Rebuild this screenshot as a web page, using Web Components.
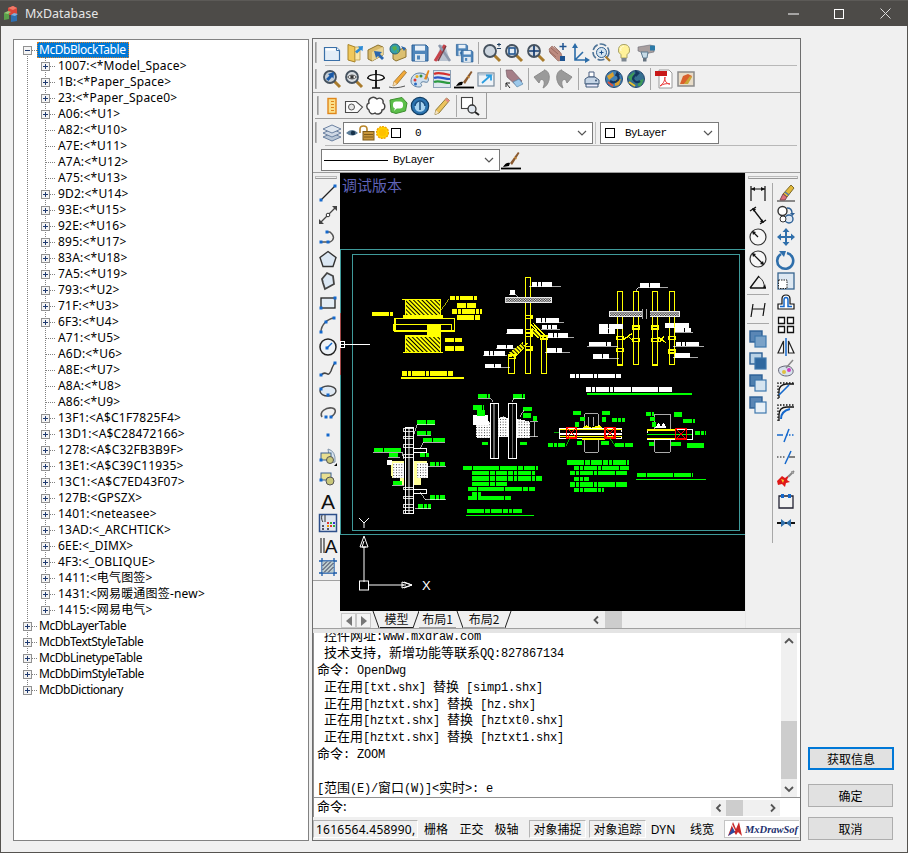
<!DOCTYPE html>
<html><head><meta charset="utf-8">
<style>
html,body{margin:0;padding:0;background:#f0f0f0;overflow:hidden}
</style></head>
<body>
<mx-window></mx-window>
<script>
const SANS='"Noto Sans","Noto Sans CJK SC",sans-serif';
const MONO='"Liberation Mono","Noto Sans CJK SC",monospace';
const mag=(c='#cdd6df')=>`<path d="M12.5 12.5l5.5 5.5" stroke="#a97b2c" stroke-width="3"/><circle cx="8" cy="8" r="6" fill="${c}" stroke="#46525e" stroke-width="1.8"/>`;
const N=(x,y)=>`<rect x="${x-1.5}" y="${y-1.5}" width="3" height="3" fill="#1468cc"/>`;
const floppy=(x,y,s)=>`<g transform="translate(${x} ${y}) scale(${s})"><path d="M2 2h14l2 2v14H2z" fill="#4f86bb" stroke="#2a5f95"/><rect x="5" y="2.6" width="10" height="5" fill="#e9f1f8"/><rect x="5" y="11" width="10" height="7" fill="#dfe8f0"/><rect x="7" y="12.5" width="3" height="4" fill="#4f86bb"/></g>`;
const over=(a,b)=>`<rect x="2" y="2" width="12" height="11" fill="${a}" stroke="#2c5f95" stroke-width="1.4"/><rect x="7" y="7" width="11" height="11" fill="${b}" stroke="#3f78ad" stroke-width="1.2"/>`;
const ICONS={
 new:`<path d="M2.500 4.500h12l3 3v10h-15z" fill="#e3edf7" stroke="#3a70a8" stroke-width="1.200"/><path d="M3.500 5.500h10v2h-10z" fill="#fff"/><path d="M14.500 4.500v3h3" fill="#fff" stroke="#3a70a8"/>`,
 open:`<path d="M4 1.500l7 2.500v15l-7-2z" fill="#f0c85a" stroke="#a98428"/><path d="M11 4h5v13h-5z" fill="#f8e6a8" stroke="#b99a48" stroke-width=".8"/><path d="M19 3l-5 .5 1.300 1.500-4.300 3.500 2 2 4-3.800 1.500 1.500z" fill="#2b8ad6"/>`,
 fold2:`<path d="M2 7l10-5 5 2v8l-11 6-4-2z" fill="#d8b968" stroke="#8d7330"/><path d="M6 9l11-5v8l-11 6z" fill="#e9d596"/><path d="M8 8l2 7 2-2 4 4 2-2-4-4 2-2z" fill="#2a66ad"/>`,
 fold3:`<path d="M5 9l11-4 2 1v8l-10 4-3-2z" fill="#dcc070" stroke="#8d7330"/><circle cx="7" cy="6" r="5" fill="#36a0a8" stroke="#22607a"/><path d="M4 4l4-1 1 3-3 2zM9 7l2 1-2 2z" fill="#5cb04a"/><path d="M13 3l5 2-2 3z" fill="#2a66ad"/>`,
 save:floppy(0,0,1),
 ramp:`<path d="M3 18L9 2h4l5 16z" fill="#b9c3d0"/><path d="M3 18L13 2" stroke="#c8434a" stroke-width="3" fill="none"/><path d="M7 2l11 16" stroke="#8c98ac" stroke-width="2.500" fill="none"/><path d="M14 3l-8 15" stroke="#7a3a40" stroke-width="1.500"/>`,
 saveall:floppy(1,0,.7)+floppy(6,6,.72),
 zpm:mag()+`<path d="M15 1.500h4M17 0v3.500M15 5.500h4" stroke="#1f3f60" stroke-width="1.100" fill="none"/>`,
 zwin:mag()+`<rect x="5" y="5" width="6" height="6" fill="#e4edf5" stroke="#1a4f8a" stroke-width="1.500"/>`,
 zpan:mag('#d6dbe0')+`<path d="M8 3v10M3 8h10" stroke="#113a70" stroke-width="1.700"/>`,
 hand:`<path d="M1 6l3-3 9 7 2 7-5 1-8-8z" fill="#bd8b80" stroke="#8f6258" stroke-width=".6"/><path d="M3 5l7 6M1 8l7 6M6 3l6 6" stroke="#8f6258" stroke-width=".8"/><path d="M15 0v7M11.500 3.500h7" stroke="#1e5390" stroke-width="1.500"/><path d="M12 13h5v5h-5z" fill="#1e5390"/>`,
 axes:`<path d="M5 3v14h13M5 17l8-8" fill="none" stroke="#2b6ca8" stroke-width="1.600"/><path d="M5 0l-3 5h6zM20 17l-5-3v6z" fill="#2b6ca8"/>`,
 zrot:`<circle cx="9" cy="9" r="8" fill="none" stroke="#4f7497" stroke-width="1.500" stroke-dasharray="7 2"/><circle cx="9.500" cy="9.500" r="5" fill="#d4e4f0" stroke="#2e5f90"/><path d="M7.500 9.500h4M9.500 7.500v4" stroke="#1a4f8a"/><path d="M13.500 13.500l4.500 4.500" stroke="#a97b2c" stroke-width="2.200"/>`,
 bulb:`<path d="M10 1.500a5.500 5.500 0 0 1 3 10.200V15H7v-3.300A5.500 5.500 0 0 1 10 1.500z" fill="#fff29a" stroke="#a8a266"/><path d="M10 3a3.500 3.500 0 0 0-3 5" stroke="#fffbe0" fill="none"/><rect x="7.500" y="15" width="5" height="3.500" fill="#7c8690"/>`,
 dry:`<path d="M2 4l12-2 4 1v6l-5 1-2 1-9-3z" fill="#a89e9e" stroke="#6b6b75" stroke-width=".6"/><path d="M14 2.500h5v5h-5z" fill="#2c7aa8"/><path d="M5 9h7l-1 6H7z" fill="#c7dbe7" stroke="#5d7a90"/><rect x="7" y="15" width="3.500" height="3.500" fill="#65727f"/>`,
 zprev:mag('#c4ced8')+`<path d="M12 3l-6 2 1.500 1.500L4 10l2.500 2 3.500-4 1.500 1.500z" fill="#1a5aa8"/>`,
 zeye:mag('#d7dce0')+`<path d="M3.500 8q4.500-4 9 0q-4.500 4-9 0z" fill="#fff" stroke="#555"/><circle cx="8" cy="8" r="1.800" fill="#333"/>`,
 cross:`<path d="M10 1v18M6 19h8M1 9h18" stroke="#111" stroke-width="1.400"/><ellipse cx="10" cy="8.500" rx="8" ry="3" fill="#fff" stroke="#111" stroke-width="1.200"/><path d="M10 1v18" stroke="#111" stroke-width="1.600"/>`,
 pen:`<path d="M1 18q6 2 16-1" stroke="#555" fill="none"/><path d="M16 1.500l2.500 2L9 15l-4 2 1-4.300z" fill="#f2a93a" stroke="#8b6420" stroke-width=".7"/><path d="M5 17l1-4.300 3 2.300z" fill="#f6dcb2"/>`,
 palette:`<path d="M10 4C4 4 1 8 1 12s4 6 8 6c3 0 3-2 2-3s1-3 4-2 4-1 3-4-4-5-8-5z" fill="#cfe0ef" stroke="#5f80a0"/><circle cx="5" cy="11" r="1.500" fill="#d63a3a"/><circle cx="7" cy="7.500" r="1.500" fill="#e8b020"/><circle cx="11" cy="7" r="1.500" fill="#3a8f3a"/><circle cx="5.500" cy="15" r="1.500" fill="#2a6ac0"/><path d="M14 10l4-9 1.500.8-3 9z" fill="#e28a20"/>`,
 stripes:`<rect x="1.500" y="1.500" width="17" height="17" fill="#dfe7ef" stroke="#8ca0b5"/><path d="M2 5c4-2 12 0 16 1" stroke="#d43030" stroke-width="2.200" fill="none"/><path d="M2 9c5-2 10 1 16 1" stroke="#2b55c8" stroke-width="2.200" fill="none"/><path d="M2 13c5-2 10 1 16 1" stroke="#2b9a40" stroke-width="2.200" fill="none"/>`,
 brush:`<path d="M0 18.500h20" stroke="#000" stroke-width="1.800"/><path d="M2 17c2-4 5-5 7-4l-1 3c-2 0-4 1-6 1z" fill="#000"/><path d="M9 13l8-11 1.500 1L11 15z" fill="#8a5a30"/><path d="M13 7l3 2" stroke="#e0a040"/>`,
 winarrow:`<rect x="2" y="4" width="16" height="13" fill="#eef3f8" stroke="#788a9c" stroke-width="1.200"/><rect x="2.500" y="4.500" width="15" height="2" fill="#b9c9d8"/><path d="M6 14l8-7M10 6.500h5v5" fill="none" stroke="#2b9ee0" stroke-width="1.800"/>`,
 tag:`<path d="M2 1h6l10 11-5 5L3 8z" fill="#a57f88" stroke="#6b5560" stroke-width=".6"/><path d="M9 13l6-3 4 5-6 3z" fill="#9cc8ea" stroke="#4c7aa0" stroke-width=".6"/><path d="M2 14l4 5M2 14v4M2 14h4" stroke="#222" fill="none"/>`,
 undo:`<path d="M13 1L2 8l5 6 1.500-3.500c3.500-.5 5 3 2.500 8.500 7-3 9-16 1.500-18z" fill="#9a9a9a" stroke="#8c8c8c"/>`,
 redo:`<path d="M7 1l11 7-5 6-1.500-3.500C8 10 6.500 13.500 9 19 2 16 0 3 7.500 1z" fill="#9a9a9a" stroke="#8c8c8c"/>`,
 printer:`<path d="M7 3h5v5H7z" fill="#fff" stroke="#4a5f80"/><path d="M3 10l3-2h7l4 3v4H3z" fill="#c6d5e6" stroke="#3f5878"/><path d="M4 15h12v3H4z" fill="#eef" stroke="#3f5878"/><circle cx="14" cy="11.500" r="1" fill="#3f5878"/>`,
 globe1:`<circle cx="10" cy="10" r="8.500" fill="#3f7fb5" stroke="#274a70"/><path d="M3 7l6-4 1 4-5 4zM11 11l6-1-2 6-4 1z" fill="#d8a030"/><path d="M4 13l5 4" stroke="#e0503a" stroke-width="2"/><path d="M6 12q4 3 8-1 2-3-2-6" fill="none" stroke="#14375f" stroke-width="2.200"/><path d="M13 2l-2 5 5-1z" fill="#14375f"/>`,
 globe2:`<circle cx="10" cy="10" r="8.500" fill="#356f90" stroke="#274a70"/><path d="M2 8l6-5 1 5-4 4zM12 12l6-2-3 7-3 0z" fill="#3f9a58"/><path d="M3 13l6 4" stroke="#e8c030" stroke-width="2"/><path d="M14 12q-4 3-7-2 0-3 4-5" fill="none" stroke="#14375f" stroke-width="2.200"/><path d="M9 1l1 7 4-4z" fill="#14375f"/>`,
 pdf:`<path d="M5 1h10l3 3v15H5z" fill="#fff" stroke="#9a9a9a"/><rect x="1" y="2" width="12" height="5" fill="#c81818"/><path d="M11 8c0 4-2 7-5 9 3-2 7-3 10-2-3 0-6-3-5-7z" fill="none" stroke="#ea3a3a"/>`,
 image:`<rect x="2" y="3" width="16" height="14" fill="#e8dcc8" stroke="#8a8a8a" stroke-width="1.500"/><path d="M4 15l3-8 5-2 4 2-3 5-5 3z" fill="#d9602c"/><path d="M8 15l6-8 2 1-4 7z" fill="#c8a838"/>`,
 ruler:`<rect x="6" y="2.500" width="8" height="15" fill="#fbe08a" stroke="#e0861a" stroke-width="1.400"/><path d="M9 5.500h3M9 8.500h3M9 11.500h3M9 14.500h3" stroke="#e0861a"/>`,
 shape:`<path d="M1.500 5.500H12l6.500 5.500-5 5.500h-12z" fill="#fbfbfb" stroke="#4a4a4a" stroke-width="1.100"/><circle cx="7.500" cy="11" r="3" fill="#e6e6e6" stroke="#555"/>`,
 cloud:`<path d="M5 2c3-2 5 0 6 1 3-2 7 0 6 4 3 2 2 7-1 7 0 4-5 5-7 3-3 2-6 0-6-3-3-2-3-6 0-7-1-3 0-4 2-5z" fill="#fff" stroke="#444" stroke-width="1.400"/>`,
 chat:`<path d="M2 4l12-2.500L19 7l-1.500 8L8 17.500 3 16z" fill="#5cbf4a" stroke="#3e8f30"/><rect x="5" y="5.500" width="10" height="7" rx="3" fill="#fff"/><path d="M7 12l-1 3 3-3z" fill="#fff"/>`,
 ring:`<circle cx="10" cy="10" r="8.700" fill="#2c74b0" stroke="#123d62" stroke-width="1.200"/><circle cx="10" cy="10.500" r="5.300" fill="#a9d4f0"/><path d="M5 10a5 5 0 0 1 10 0" fill="none" stroke="#1a4f80" stroke-width="1.500"/><path d="M10 6v8" stroke="#1a4f80" stroke-width="1.500"/>`,
 pencil:`<path d="M14.500 2l3 2.500L7 17l-4 1.500.8-4.500z" fill="#ecc35c" stroke="#8f7c3c"/><path d="M14.500 2l3 2.500-1.500 2-3-2.500z" fill="#e58a80"/><path d="M3 18.500l.8-4.500 3.200 3z" fill="#f5e2c0"/>`,
 zrect:`<rect x="1.500" y="1.500" width="11" height="11" fill="#fff" stroke="#444" stroke-width="1.100"/><circle cx="12" cy="13" r="4" fill="#dfe6ee" stroke="#333" stroke-width="1.300"/><path d="M15 16l4 3" stroke="#222" stroke-width="2"/>`,
 layers:`<path d="M10 10L1 14l9 4 9-4z" fill="#b7c5d5" stroke="#6a80a0"/><path d="M10 6L1 10l9 4 9-4z" fill="#cfd8e4" stroke="#6a80a0"/><path d="M10 2L1 6l9 4 9-4z" fill="#e0e7ef" stroke="#6a80a0"/>`,
 line:`<path d="M3 17L17 3" stroke="#222" stroke-width="1.300"/>`+N(3,17)+N(17,3),
 dline:`<path d="M3 17L17 3" stroke="#444" stroke-width="1.300"/><circle cx="10" cy="10" r="1.800" fill="#fff" stroke="#333"/><path d="M1 19v-5l5 5zM19 1v5l-5-5z" fill="#444"/>`,
 parc:`<path d="M3 15h9q7-4 0-10H8" fill="none" stroke="#555" stroke-width="1.400"/>`+N(3,15)+N(10,15)+N(9,5),
 pent:`<path d="M10 2.500l8 6-3 9H5l-3-9z" fill="#dbe7f3" stroke="#333" stroke-width="1.400"/>`,
 poly:`<path d="M9 2l6 3 1 8-9 5-2-6-1-4z" fill="#dbe7f3" stroke="#444" stroke-width="1.800"/>`,
 rectn:`<rect x="3" y="5" width="14" height="10" fill="#e4edf5" stroke="#222" stroke-width="1.300"/>`+N(3,15)+N(17,5),
 arc:`<path d="M3 17C3 10 9 4 16 3" fill="none" stroke="#555" stroke-width="1.500"/>`+N(3,17)+N(8,7)+N(16,3),
 circ:`<circle cx="10" cy="10" r="8" fill="#edf2f7" stroke="#222" stroke-width="1.500"/><path d="M9 11l5-5" stroke="#1468cc" stroke-width="1.500"/>`+N(9,11),
 spl:`<path d="M3 16c6-6 6 4 10-4 1-3 3-7 4-8" fill="none" stroke="#444" stroke-width="1.500"/>`+N(3,16)+N(17,4),
 ell:`<ellipse cx="10" cy="10" rx="8" ry="5" fill="#dfe9f3" stroke="#444" stroke-width="1.400"/>`+N(3,8)+N(10,14),
 earc:`<path d="M4 14C1 9 8 4 14 5c5 1 4 6-1 9" fill="none" stroke="#555" stroke-width="1.600"/>`+N(8,14)+N(13,14),
 point:N(10,10),
 block:`<path d="M10 2q8 2 7 13l-5 1z" fill="#d8e4ef" stroke="#7f93a8"/><rect x="3" y="6" width="10" height="7" fill="#e9df90" stroke="#3a6090"/><circle cx="12" cy="13" r="3.500" fill="#c9c77a" stroke="#555"/>`+N(3,13)+`<path d="M16 19h3v-3z" fill="#000"/>`,
 block2:`<rect x="3" y="4" width="10" height="7" fill="#e9df90" stroke="#3a6090"/><circle cx="12" cy="12" r="4" fill="#c9c77a" stroke="#555"/>`+N(3,11),
 tA:`<text x="10" y="18" text-anchor="middle" font-family="Liberation Sans" font-size="21" fill="#111">A</text>`,
 table:`<rect x="1.500" y="1.500" width="17" height="17" fill="#dfe6f0" stroke="#2d4f8a" stroke-width="1.500"/><path d="M4 2c-1 3 0 6 1 7M7 2v7" stroke="#333" fill="none"/><path d="M9 9h2v2H9z" fill="#d33"/><path d="M12 9h2v2h-2z" fill="#3a3"/><path d="M15 9h2v2h-2z" fill="#33c"/><path d="M9 12h2v2H9z" fill="#e90"/><path d="M12 12h2v2h-2z" fill="#d33"/><path d="M15 12h2v2h-2z" fill="#3a3"/><path d="M4 12h2v2H4zM4 15h2v2H4zM9 15h2v2H9z" fill="#556"/>`,
 hatch:`<path d="M4 1v18M16 1v18M1 4h18M1 16h18" stroke="#1a5aa8" stroke-width="1.300"/><rect x="4.500" y="4.500" width="11" height="11" fill="#bcc" stroke="none"/><path d="M4.500 9l4.500-4.500M4.500 13L13 4.500M6 15.500l9.500-9.500M10 15.500l5.500-5.500" stroke="#335" stroke-width="1"/>`,
 dlin:`<path d="M3 3v15M17 3v15" stroke="#111" stroke-width="1.200"/><path d="M3 6h14" stroke="#111"/><path d="M3 6l4-2v4zM17 6l-4-2v4z" fill="#111"/>`,
 dali:`<path d="M2 6l6-4M12 19l6-4M5 4l10 13" stroke="#111" stroke-width="1.300"/><path d="M4 3l4 1-2 3zM16 18l-4-1 2-3z" fill="#111"/>`,
 drad:`<circle cx="10" cy="10" r="8" fill="#f7f7f7" stroke="#333" stroke-width="1.200"/><path d="M10 10L5 5" stroke="#111" stroke-width="1.200"/><path d="M4 4l4 1-3 3z" fill="#111"/>`,
 ddia:`<circle cx="10" cy="10" r="8" fill="#f7f7f7" stroke="#333" stroke-width="1.200"/><path d="M5 5l10 10" stroke="#111" stroke-width="1.200"/><path d="M4 4l4 1-3 3zM16 16l-4-1 3-3z" fill="#111"/>`,
 dang:`<path d="M2 17h16M2 17L11 5" stroke="#111" stroke-width="1.300" fill="none"/><path d="M11 6q6 4 5 11" stroke="#333" fill="none"/><path d="M15 17l2-4 1 4z" fill="#111"/>`,
 dbrk:`<path d="M5 4L3 17M17 3l-2 13M4 9h12" stroke="#111" stroke-width="1.200"/>`,
 ov1:over('#5a86b5','#7aa2c8'),
 ov2:over('#b9d2e6','#2f689f'),
 ov3:over('#4f80af','#d5e4f0'),
 ov4:over('#5a86b5','#e8f0f7'),
 erase:`<path d="M1 18h18" stroke="#222"/><path d="M15 2l3 3-7 9-4-3z" fill="#e2b93a" stroke="#7d6a2b"/><path d="M7 11l4 3-2 3H4z" fill="#e0707a" stroke="#7d4a50"/><path d="M9 9l4 3" stroke="#4f78b0" stroke-width="1.500"/>`,
 copyc:`<circle cx="6.500" cy="6" r="4.500" fill="#fff" stroke="#333" stroke-width="1.400"/><circle cx="13" cy="14" r="4" fill="#dfe8f2" stroke="#2c5f95" stroke-width="1.400"/><circle cx="7" cy="14" r="3" fill="#fff" stroke="#333"/><path d="M11 3q5 0 5 5" fill="none" stroke="#2c5f95" stroke-width="1.400"/><path d="M14 8h5l-2.500 3z" fill="#2c5f95"/>`,
 move:`<path d="M10 1l3.500 4H11v4h4V6.500L19 10l-4 3.500V11h-4v4h2.500L10 19l-3.500-4H9v-4H5v2.500L1 10l4-3.500V9h4V5H6.500z" fill="#2f6fab"/>`,
 rot:`<path d="M5 5a8 8 0 1 0 6-1" fill="none" stroke="#2f6fab" stroke-width="2.600"/><path d="M3 2l7 0-2 6z" fill="#2f6fab"/>`,
 scale:`<rect x="2" y="2" width="16" height="16" fill="#dde8f2" stroke="#36648f" stroke-width="1.300"/><rect x="2.500" y="9" width="8.500" height="8.500" fill="#fff" stroke="#222" stroke-dasharray="1.500 1"/>`,
 offs:`<path d="M2 16V11h4V6q0-4 4-4t4 4v5h4v5z" fill="#fff" stroke="#111" stroke-width="1.200"/><path d="M4 13.500h4V7q0-2.500 2-2.500T12 7v6.500h4" fill="none" stroke="#1468cc" stroke-width="1.500"/>`,
 array:`<path d="M2.500 2.500h6v6h-6zM11.500 2.500h6v6h-6zM2.500 11.500h6v6h-6zM11.500 11.500h6v6h-6z" fill="#fff" stroke="#111" stroke-width="1.300"/>`,
 mirror:`<path d="M10 1v18" stroke="#1468cc" stroke-width="1.500"/><path d="M7.500 4v12H2zM12.500 4v12H18z" fill="#fff" stroke="#222" stroke-width="1.200"/>`,
 fill1:`<path d="M2 18V2h16" fill="none" stroke="#111" stroke-width="1.300" stroke-dasharray="1.500 1.500"/><path d="M3 17V10q0-6 7-7h8" fill="none" stroke="#111" stroke-width="1.300"/><path d="M3 14L13 4" stroke="#1468cc" stroke-width="1.600"/>`,
 fill2:`<path d="M2 18V2h16" fill="none" stroke="#111" stroke-width="1.300" stroke-dasharray="1.500 1.500"/><path d="M3 18V12q0-8 8-8h7" fill="none" stroke="#111" stroke-width="1.300"/><path d="M5 16q0-8 9-10" fill="none" stroke="#1468cc" stroke-width="2"/>`,
 ext:`<path d="M1 10h6M13 10h1.500M16 10h1.500M10 10h1.500" stroke="#1468cc" stroke-width="1.300"/><path d="M8 17l5-13" stroke="#1468cc" stroke-width="1.500"/>`,
 trim:`<path d="M1 10h1.500M4 10h1.500M7 10h1.500M13 10h6" stroke="#111" stroke-width="1.200"/><path d="M9 17l6-13" stroke="#1468cc" stroke-width="1.500"/>`,
 expl:`<path d="M1 12l5-5 3 2 4-3-2 5 3 2-4 1-1 4-3-3-4 1z" fill="#e01818"/><path d="M5 10l3 1-1 3z" fill="#f8d030"/><path d="M12 8l6-6" stroke="#888" stroke-width="2"/><path d="M15 2l3 3" stroke="#aaa"/>`,
 stretch:`<path d="M3 5h14v12H3z" fill="#f2f2f2" stroke="#223" stroke-width="1.300"/><rect x="5" y="3" width="3" height="4" fill="#1468cc"/><rect x="12" y="3" width="3" height="4" fill="#1468cc"/>`,
 join:`<path d="M1 10h18" stroke="#111" stroke-width="2"/><path d="M5 6l5 4-5 4zM15 6l-5 4 5 4z" fill="#2f6fab"/>`,
 paint2:`<path d="M3 9c5-3 12-3 14 2 1 4-3 6-7 6S1 14 3 9z" fill="#d8e2ee" stroke="#667"/><path d="M10 9l7-8" stroke="#888" stroke-width="1.500"/><circle cx="13" cy="11" r="2" fill="#d040c0"/><circle cx="8" cy="13" r="2" fill="#e0c040"/>`
};
ICONS.IA=`<path d="M3 3v15M6 3v15" stroke="#222" stroke-width="1.100"/><text x="13" y="18" text-anchor="middle" font-family="Liberation Sans" font-size="19" fill="#111">A</text>`;

class MxIcon extends HTMLElement{
 connectedCallback(){
  const s=this.attachShadow({mode:'open'});
  const n=+this.getAttribute('size')||20;
  s.innerHTML=`<style>:host{display:inline-flex;align-items:center;justify-content:center;width:22px;height:22px;flex:none}svg{display:block;overflow:visible}</style><svg width="${n}" height="${n}" viewBox="0 0 20 20">${ICONS[this.getAttribute('name')]||''}</svg>`;
 }
}
customElements.define('mx-icon',MxIcon);

class MxTools extends HTMLElement{
 connectedCallback(){
  const s=this.attachShadow({mode:'open'});
  const v=this.hasAttribute('vertical');
  const items=this.getAttribute('items').trim().split(/\s+/).map(n=>n==='|'?'<i></i>':`<mx-icon name="${n}"></mx-icon>`).join('');
  s.innerHTML=`<style>:host{display:flex;flex-direction:${v?'column':'row'};align-items:center;flex:none}
  i{display:block;flex:none;${v?'width:22px;height:5px;border-top:1px solid #a8a8a8;box-sizing:border-box;margin:2px 0 0;height:5px':'width:6px;height:22px;background:linear-gradient(#a8a8a8,#a8a8a8) center/1px 100% no-repeat'}}</style>${items}`;
 }
}
customElements.define('mx-tools',MxTools);

const CJK=/([\u3000-\u9fff\uff00-\uffef]+)/;
class MxCmdLine extends HTMLElement{
 connectedCallback(){
  const s=this.attachShadow({mode:'open'});
  const t=this.getAttribute('text')||'';
  const runs=t.split(CJK).map(p=>CJK.test(p)?`<b>${p}</b>`:p.replace(/</g,'&lt;').replace(/>/g,'&gt;')).join('');
  s.innerHTML=`<style>:host{display:block;height:16.9px;line-height:16.9px;white-space:pre;font:12px/16.9px ${MONO};letter-spacing:-.2px;color:#000}
  b{font:400 13px/16.9px "Noto Sans CJK SC",sans-serif;letter-spacing:0}</style>${runs}`;
 }
}
customElements.define('mx-cmdline',MxCmdLine);

class MxCombo extends HTMLElement{
 connectedCallback(){
  const s=this.attachShadow({mode:'open'});
  s.innerHTML=`<style>:host{display:flex;align-items:center;box-sizing:border-box;height:22px;background:#fff;border:1px solid #7a7a7a;flex:none;position:relative;font:11px ${MONO};letter-spacing:-.7px;color:#000}
  .c{flex:1;display:flex;align-items:center;min-width:0}svg{flex:none;margin:0 5px}</style><div class="c"><slot></slot></div><svg width="10" height="6" viewBox="0 0 10 6"><path d="M1 1l4 4 4-4" fill="none" stroke="#555" stroke-width="1.200"/></svg>`;
 }
}
customElements.define('mx-combo',MxCombo);

class MxButton extends HTMLElement{
 connectedCallback(){
  const s=this.attachShadow({mode:'open'});
  const p=this.hasAttribute('primary');
  s.innerHTML=`<style>:host{display:flex;align-items:center;justify-content:center;box-sizing:border-box;width:${p?86:85}px;height:23px;background:#e1e1e1;border:${p?'2px solid #0078d7':'1px solid #adadad'};font:12px "Noto Sans CJK SC",sans-serif;color:#000}</style><slot></slot>`;
 }
}
customElements.define('mx-button',MxButton);

class MxTree extends HTMLElement{
 connectedCallback(){
  const s=this.attachShadow({mode:'open'});
  const kids=`+1007:<*Model_Space>|+1B:<*Paper_Space>|+23:<*Paper_Space0>|+A06:<*U1>|-A82:<*U10>|-A7E:<*U11>|-A7A:<*U12>|-A75:<*U13>|+9D2:<*U14>|+93E:<*U15>|+92E:<*U16>|+895:<*U17>|+83A:<*U18>|+7A5:<*U19>|+793:<*U2>|+71F:<*U3>|+6F3:<*U4>|-A71:<*U5>|-A6D:<*U6>|-A8E:<*U7>|-A8A:<*U8>|-A86:<*U9>|+13F1:<A$C1F7825F4>|+13D1:<A$C28472166>|+1278:<A$C32FB3B9F>|+13E1:<A$C39C11935>|+13C1:<A$C7ED43F07>|+127B:<GPSZX>|+1401:<neteasee>|+13AD:<_ARCHTICK>|+6EE:<_DIMX>|+4F3:<_OBLIQUE>|+1411:<电气图签>|+1431:<网易暖通图签-new>|+1415:<网易电气>`.split('|');
  const esc=t=>t.replace(/</g,'&lt;').replace(/>/g,'&gt;');
  const box=(open)=>`<svg class="x" width="9" height="9" viewBox="0 0 9 9"><rect x=".5" y=".5" width="8" height="8" fill="#f4f4f4" stroke="#919191"/><path d="M2 4.500h5${open?'':'M4.500 2v5'}" stroke="#1f3a70"/></svg>`;
  let h=`<div class="r"><span class="c f">${box(1)}</span><span class="l sel">McDbBlockTable</span></div>`;
  kids.forEach((k,i)=>{
   const has=k[0]==='+';const last=i===kids.length-1;
   h+=`<div class="r"><span class="c v"></span><span class="c ${last?'e':'m'}">${has?box(0):''}</span><span class="l k">${esc(k.slice(1))}</span></div>`;
  });
  ['McDbLayerTable','McDbTextStyleTable','McDbLinetypeTable','McDbDimStyleTable','McDbDictionary'].forEach((k,i)=>{
   h+=`<div class="r"><span class="c ${i===4?'e':'m'}">${box(0)}</span><span class="l">${k}</span></div>`;
  });
  const dotV='repeating-linear-gradient(#808080 0 1px,transparent 1px 2px)';
  const dotH='repeating-linear-gradient(90deg,#808080 0 1px,transparent 1px 2px)';
  s.innerHTML=`<style>:host{display:block;box-sizing:border-box;width:296px;height:802px;border:1px solid #828282;outline:1px solid #fff;outline-offset:-2px;background:#fff;padding:2px 0 0 5px;overflow:hidden;box-shadow:inset 1px 1px 0 #a0a0a0;font:12px/16px ${SANS};color:#000}
  .r{display:flex;height:16px;align-items:center;white-space:nowrap}
  .c{width:18px;height:16px;flex:none;display:flex;align-items:center;justify-content:center;background-repeat:no-repeat}
  .v{background-image:${dotV};background-size:1px 16px;background-position:8px 0}
  .m{background-image:${dotV},${dotH};background-size:1px 16px,9px 1px;background-position:8px 0,9px 8px}
  .e{background-image:${dotV},${dotH};background-size:1px 8px,9px 1px;background-position:8px 0,9px 8px}
  .f{background-image:${dotV},${dotH};background-size:1px 8px,9px 1px;background-position:8px 8px,9px 8px}
  .x{display:block;margin-left:-1px}
  .l{padding:0 3px 0 2px;line-height:16px;letter-spacing:-.45px}.k{padding-left:3px;letter-spacing:.2px}
  .sel{background:#0078d7;color:#fff;outline:1px dotted #e08020;outline-offset:-1px}
  </style>${h}`;
 }
}
customElements.define('mx-tree',MxTree);

class MxCanvas extends HTMLElement{
 connectedCallback(){
  const s=this.attachShadow({mode:'open'});
  const Y='#ffff00',W='#fff',G='#00ff00';
  const lab=(x,y,w,c,u)=>`<path d="M${x} ${y}h${w}" stroke="${c}" stroke-width="14" stroke-dasharray="16 1.500 10 1.500 24 1.500" fill="none"/>`+(u?`<path d="M${x} ${y+9}h${w+u}" stroke="${c}" stroke-width="2.400"/>`:'');
  const R=(x,y,w,h,c,sw=4)=>`<rect x="${x}" y="${y}" width="${w}" height="${h}" fill="none" stroke="${c}" stroke-width="${sw}"/>`;
  const F=(x,y,w,h,c)=>`<rect x="${x}" y="${y}" width="${w}" height="${h}" fill="${c}"/>`;
  const P=(d,c,sw=3)=>`<path d="${d}" fill="none" stroke="${c}" stroke-width="${sw}"/>`;
  const XR=(x,y,w,h)=>R(x,y,w,h,'#ff0000',4)+P(`M${x} ${y}L${x+w} ${y+h}M${x+w} ${y}L${x} ${y+h}`,'#ff0000',3);
  let a='';
  // detail 1
  a+=`<rect x="196" y="178" width="106" height="50" fill="url(#hy)"/><rect x="196" y="288" width="106" height="50" fill="url(#hy)"/>`+R(196,178,106,50,Y,4)+R(196,288,106,50,Y,4);
  a+=F(190,225,118,10,Y)+R(165,236,178,37,Y,4)+R(160,255,176,17,Y,3)+F(262,252,40,36,Y)+P('M186 178h116M190 338h118',Y,4);
  a+=lab(95,222,65,Y)+lab(330,174,85,Y)+lab(352,197,56,Y)+lab(336,215,90,Y)+lab(350,232,70,Y)+lab(316,300,50,Y)+lab(316,326,55,Y)+P('M302 212l26-36',Y,2)+lab(186,400,154,Y);
  a+=F(183,411,189,5,Y);
  // detail 2
  a+=R(556,112,16,288,Y)+R(604,297,16,103,Y)+R(506,350,18,50,Y)+P('M572 252l38 42M580 250l38 40',Y,4)+P('M514 345l36-40M526 350l36-40',Y,4)+`<path d="M505 340l40-30 10 10-35 35z" fill="url(#hy)"/><path d="M575 262l30 24-10 10-25-24z" fill="url(#hy)"/>`;
  a+=R(556,226,20,10,Y)+R(556,268,20,10,Y)+R(556,280,20,10,Y)+R(556,320,20,10,Y)+R(601,288,20,10,Y)+R(505,345,20,10,Y);
  a+=F(498,172,137,16,'url(#hw)')+R(498,172,137,16,W,2.500);
  a+=lab(576,133,60,W)+P('M568 139h95',W,2)+lab(510,158,18,W)+P('M508 165h20l5 6',W,2)+lab(588,241,72,W)+P('M588 247h84',W,2)+lab(606,261,46,W)+P('M604 268h56',W,2)+lab(624,287,60,W)+P('M622 293h80',W,2)+lab(622,331,44,W)+P('M616 337h74',W,2)+lab(500,274,48,W)+P('M498 281h50',W,2)+lab(472,321,46,W)+P('M468 327h58',W,2)+lab(432,340,62,W)+P('M430 347h70',W,2)+lab(436,378,46,W)+P('M434 384h76',W,2);
  // detail 3
  a+=R(832,155,15,220,Y)+R(880,155,15,218,Y)+R(937,155,15,220,Y)+R(988,155,15,218,Y)+F(808,214,212,16,'url(#hw)')+R(808,214,212,16,W,2.500)+F(905,205,24,30,'#000')+P('M908 208v28M920 208v28',W,2);
  [[832,290],[880,258],[880,296],[832,326],[937,258],[937,296],[988,290],[988,330]].forEach(p=>a+=R(p[0]-2,p[1],20,9,Y));
  a+=P('M850 300l26-20M866 290l12 12M952 290l26 18M958 306l14-16',Y,4)+P('M888 152q2-10 12-10h85',W,2)+lab(901,136,58,W)+lab(778,259,70,W)+P('M776 265h74',W,2)+lab(778,274,48,W)+P('M776 281h50',W,2)+lab(746,312,68,W)+P('M742 320h92',W,2)+lab(760,350,46,W)+P('M758 356h78',W,2)+lab(976,256,70,W)+P('M974 262h72',W,2)+lab(1006,270,48,W)+P('M1004 277h54',W,2)+lab(1008,312,72,W)+P('M1000 320h92',W,2)+lab(1004,347,46,W)+P('M1000 352h74',W,2);
  a+=lab(690,408,152,W)+lab(738,448,258,W)+F(741,459,315,5,G);
  let b='';
  // detail 4
  b+=R(196,98,24,258,W,3)+R(207,98,3,258,W,1.500);
  [102,124,150,180,278,305,330,348].forEach(y=>b+=R(192,y,30,7,W,2.500));
  b+=`<path d="M152 198h40v72h-12v-20h-25z" fill="#ffff99"/><path d="M222 198h40v52h-20v20h-20z" fill="#ffff99"/>`+F(158,205,34,45,'url(#nz)')+F(232,205,32,45,'url(#nz)')+F(141,195,14,15,W);
  b+=R(222,160,38,12,W,3)+R(222,285,38,12,W,3);
  b+=lab(232,82,53,G)+P('M222 118l10-30h54',W,2)+lab(232,114,40,G)+P('M230 121h44',W,2)+lab(250,135,65,G)+P('M240 160l10-18h64',W,2)+lab(103,165,80,G)+P('M100 172h86l6 20',W,2)+lab(146,180,28,G)+P('M144 188h36',W,2)+lab(240,180,28,G)+lab(270,207,45,G)+P('M262 214h56',W,2)+lab(160,264,25,G)+P('M156 271h36',W,2)+lab(270,308,46,G)+P('M240 292l16 22h62',W,2)+lab(234,335,40,G)+P('M226 342h46',W,2);
  // detail 5
  b+=R(451,25,24,165,W,3)+R(506,25,24,165,W,3)+R(462,25,2,165,W,1.200)+R(517,25,2,165,W,1.200)+`<path d="M405 70l45 10v50h-40zM530 70l40 10v50h-40zM475 70l15-6 15 6v55h-30z" fill="url(#nz)"/>`;
  b+=F(400,60,45,30,W)+F(410,44,24,20,G)+lab(415,3,36,G)+lab(520,5,34,G)+lab(400,38,32,G)+lab(550,42,28,G)+lab(550,61,24,G)+lab(578,70,14,G)+P('M460 22l-6-10h-40M515 22l6-12h34M540 65l12-20',W,2)+P('M584 80v46M570 80h24M570 126h24',W,2)+F(425,142,20,7,G)+F(540,142,20,7,G);
  // text block
  [[370,219,225],[395,234,190],[395,250,210],[395,267,105],[385,282,200],[396,297,26],[385,309,128]].forEach(r=>b+=lab(r[0],r[1],r[2],G));
  b+=lab(380,348,166,G)+F(378,360,204,2.500,G);
  // detail 6
  b+=R(660,100,185,30,W,3)+`<path d="M725 100l14-10 16 8 22-8 12 10zM725 130h70v6h-70z" fill="#ffff00"/>`+F(660,112,185,14,'#000')+P('M660 105h185M660 126h185',Y,3)+P('M660 118h185',W,5)+P('M735 56h40v36M735 56v36M735 136v36h40v-36M745 66v26M760 66v26',W,2);
  b+=XR(680,97,30,32)+XR(795,97,30,32);
  b+=lab(698,54,26,G)+lab(785,54,26,G)+lab(816,75,38,G)+lab(704,88,14,G)+lab(720,72,16,G)+lab(785,74,14,G)+lab(624,150,50,G)+lab(826,150,54,G)+lab(712,144,14,G)+lab(782,144,24,G)+P('M642 112h16M690 130l-12 24M810 130l16 24',G,2);
  // detail 7
  b+=R(922,103,135,30,W,3)+F(922,115,135,13,'#000')+P('M922 105h85M922 130h85',Y,4)+P('M922 119h135',G,4)+P('M945 58h46v44M945 58v44M945 134v38h46v-38',W,2)+`<path d="M945 100l10-16 8 10 8-10 10 16z" fill="#fff"/>`;
  b+=XR(1007,100,32,32);
  b+=lab(918,57,24,G)+lab(1003,58,22,G)+lab(930,72,16,G)+lab(1030,78,36,G)+lab(1065,114,32,G)+lab(926,147,16,G)+lab(1040,152,54,G)+lab(992,147,30,G)+lab(936,88,12,G);
  // note + title
  [[680,203,186],[702,219,165],[690,234,170],[702,252,46],[690,268,172],[702,285,90]].forEach(r=>b+=lab(r[0],r[1],r[2],G));
  b+=lab(892,240,168,G)+F(888,252,210,2.500,G);
  s.innerHTML=`<style>:host{display:block;width:405px;height:438px;background:#000;flex:none;overflow:hidden}svg{display:block}</style>
  <svg width="405" height="438" viewBox="340 173 405 438" shape-rendering="crispEdges">
  <defs>
   <pattern id="hy" width="9" height="9" patternUnits="userSpaceOnUse" patternTransform="rotate(45)"><rect width="9" height="9" fill="#000"/><path d="M0 1h9M0 4h9" stroke="#ffff00" stroke-width="1.300"/></pattern>
   <pattern id="hw" width="5" height="5" patternUnits="userSpaceOnUse"><rect width="5" height="5" fill="#fff"/><rect width="2" height="2" fill="#222"/><rect x="3" y="3" width="2" height="2" fill="#222"/></pattern>
   <pattern id="nz" width="8" height="8" patternUnits="userSpaceOnUse"><rect width="8" height="8" fill="#fff"/><rect x="1" y="1" width="1.500" height="1.500" fill="#222"/><rect x="5" y="3" width="1.500" height="1.500" fill="#222"/><rect x="2" y="6" width="1.500" height="1.500" fill="#222"/></pattern>
  </defs>
  <text x="342" y="191" font-family="Noto Sans CJK SC" font-size="15" fill="#5f63b6">调试版本</text>
  <path d="M340.500 534.500V249.500H745M340 534.500H745M352.500 530.500V254.500H739.500V530.500z" fill="none" stroke="#3f9a9a"/>
  <path d="M340.500 313v62" stroke="#a04848" stroke-width="1.500"/>
  <path d="M345 344.500h25" stroke="#fff"/><rect x="340.500" y="341.500" width="4" height="6" fill="none" stroke="#fff"/>
  <path d="M340 344.500h4" stroke="#fff"/>
  <g transform="translate(340 240) scale(.33333)">${a}</g>
  <g transform="translate(340 395) scale(.33333)">${b}</g>
  <g shape-rendering="auto" fill="none" stroke="#fff">
   <path d="M364 582V547M369 585h35"/><rect x="359.500" y="581" width="9" height="9"/>
   <path d="M364 536l-4 11h8zM364 541l-2 6h4M412 585l-10-3v6zM406 585h-4"/>
   <path d="M404 582l8 3-8 3" />
   <path d="M359 518l5 5 5-5M364 523v5"/>
  </g>
  <text x="422" y="590" font-family="Liberation Sans" font-size="13" fill="#fff">X</text>
  </svg>`;
 }
}
customElements.define('mx-canvas',MxCanvas);

class MxHScroll extends HTMLElement{
 connectedCallback(){
  const s=this.attachShadow({mode:'open'});
  const th=+this.getAttribute('thumb')||16, pre=+this.getAttribute('pre')||15;
  const end=this.hasAttribute('noend')?'':`<svg width="15" height="16" viewBox="0 0 15 16"><path d="M6 4.500l3.500 3.500-3.500 3.500" fill="none" stroke="#555" stroke-width="1.800"/></svg>`;
  s.innerHTML=`<style>:host{display:flex;align-items:center;background:#f0f0f0;height:100%;flex:none}
  svg{flex:none;display:block}.t{background:#cdcdcd;height:100%;flex:none}.p{flex:1}</style>
  <svg width="${pre}" height="16" viewBox="0 0 ${pre} 16"><path d="M${pre/2+2} 4.500l-3.500 3.500 3.500 3.500" fill="none" stroke="#555" stroke-width="1.800"/></svg>
  <div class="t" style="width:${th}px"></div><div class="p"></div>${end}`;
 }
}
customElements.define('mx-hscroll',MxHScroll);

class MxTabs extends HTMLElement{
 connectedCallback(){
  const s=this.attachShadow({mode:'open'});
  const sl=(d,w=8)=>`<svg width="${w}" height="17" viewBox="0 0 ${w} 17"><path d="${d}" fill="none" stroke="#222"/></svg>`;
  s.innerHTML=`<style>:host{display:flex;height:17px;background:#f0f0f0;flex:none;align-items:stretch;font:12px/16px "Noto Sans CJK SC",sans-serif;color:#111}
  .n{width:15px;box-sizing:border-box;border:1px solid #c8c8c8;background:#f4f4f4;display:flex;align-items:center;justify-content:center;margin-top:2px;flex:none}
  .t{display:flex;align-items:center;justify-content:center;border-bottom:1px solid #a0a0a0;box-sizing:border-box;flex:none}
  .a{border-bottom-color:#222}svg{display:block;flex:none}.sp{flex:1}</style>
  <div style="width:1px;flex:none"></div>
  <div class="n"><svg width="6" height="10" viewBox="0 0 6 10"><path d="M6 0v10L0 5z" fill="#777"/></svg></div>
  <div class="n"><svg width="6" height="10" viewBox="0 0 6 10"><path d="M0 0v10l6-5z" fill="#777"/></svg></div>
  <div style="width:1px;flex:none"></div>
  ${sl('M1 0l6 17')}<div class="t a" style="width:33px">模型</div>${sl('M6 0L0 17',6)}
  <div class="t" style="width:37px">布局1</div>${sl('M1 0l6 17')}
  <div class="t" style="width:40px">布局2</div>${sl('M7 0L1 17')}
  <div style="width:75px;flex:none"></div>
  <mx-hscroll noend thumb="17" pre="18" style="flex:1"></mx-hscroll>`;
 }
}
customElements.define('mx-tabs',MxTabs);

class MxStatus extends HTMLElement{
 connectedCallback(){
  const s=this.attachShadow({mode:'open'});
  s.innerHTML=`<style>:host{display:flex;align-items:center;height:23px;background:#f0f0f0;flex:none;font:12px "Noto Sans","Noto Sans CJK SC",sans-serif;color:#000;padding-top:1px;box-sizing:border-box}
  div{box-sizing:border-box;height:18px;flex:none;display:flex;align-items:center;justify-content:center;white-space:nowrap;overflow:hidden}
  .s{border:1px solid #b4b4b4;border-right-color:#fff;border-bottom-color:#fff}
  .logo{width:75px;justify-content:flex-start;background:#fff;border:1px solid #c4c4c4;border-right:0;gap:2px;padding-left:2px;font:italic 700 10.500px "Liberation Serif",serif;color:#23306e}</style>
  <div class="s" style="width:105px;justify-content:flex-start;padding-left:2px;letter-spacing:.25px">1616564.458990,</div>
  <div style="width:36px">栅格</div><div style="width:35px">正交</div><div style="width:35px">极轴</div>
  <div class="s" style="width:57px;margin-left:5px">对象捕捉</div><div class="s" style="width:57px;margin-left:3px">对象追踪</div>
  <div style="width:34px">DYN</div><div style="width:44px">线宽</div>
  <div class="logo"><svg width="16" height="16" viewBox="0 0 16 16" style="flex:none"><path d="M1 15L6 1l3 7 3-7 3 14-4-4-2 3-2-3z" fill="#c82828"/><path d="M1 15L6 6l2 5z" fill="#2a4aa0"/><path d="M4 2l4 8" stroke="#fff"/></svg>MxDrawSof</div>`;
 }
}
customElements.define('mx-status',MxStatus);

class MxCad extends HTMLElement{
 connectedCallback(){
  const s=this.attachShadow({mode:'open'});
  const lines=[' 控件网址:www.mxdraw.com',' 技术支持，新增功能等联系QQ:827867134','命令: OpenDwg',' 正在用[txt.shx] 替换 [simp1.shx]',' 正在用[hztxt.shx] 替换 [hz.shx]',' 正在用[hztxt.shx] 替换 [hztxt0.shx]',' 正在用[hztxt.shx] 替换 [hztxt1.shx]','命令: ZOOM','','[范围(E)/窗口(W)]<实时>: e'];
  s.innerHTML=`<style>:host{display:flex;flex-direction:column;box-sizing:border-box;width:489px;height:803px;margin-top:-1px;border:1px solid #6e6e6e;background:#f0f0f0;flex:none}
  .tb{display:flex;align-items:center;flex:none;padding-left:8px;position:relative;box-sizing:border-box}
  .grip::before{content:"";position:absolute;left:2px;top:3px;bottom:3px;width:2px;border:1px solid #bbb;border-left-color:#999;box-sizing:border-box}
  .rule{position:absolute;left:12px;right:3px;bottom:0;height:1px;background:#b8b8b8}
  .r1{height:27px}.r2{height:27px;border-bottom:1px solid #9c9c9c}.r3{height:26px;padding:0}
  .r3box{display:flex;align-items:center;height:26px;width:172px;padding-left:6px;box-sizing:border-box;border-right:1px solid #9c9c9c;border-bottom:1px solid #9c9c9c;margin-left:2px;position:relative}
  .r4{height:27px;gap:0;padding-left:8px}.r5{height:27px;border-bottom:1px solid #9c9c9c;padding:2px 0 0 8px}
  .sep{width:1px;height:22px;background:#c0c0c0;margin:0 2px 0 2px;flex:none}
  .txt{margin-left:22px}
  .mid{display:flex;flex:none;height:455px}
  .vl{width:27px;flex:none;display:flex;flex-direction:column;box-sizing:border-box;padding:3px 0 0 2px;height:455px}
  .gh{height:3px;width:22px;border:1px solid #bbb;border-bottom-color:#999;box-sizing:border-box;margin-bottom:3px;flex:none}
  .fill{margin-top:auto;border-top:1px solid #a0a0a0;height:48px;margin-left:-2px;background:#f3f3f3;width:27px;flex:none;box-sizing:border-box}
  .cc{display:flex;flex-direction:column;width:405px;flex:none}
  .vr{width:55px;flex:none;box-sizing:border-box;border-left:1px solid #e8e8e8;padding:3px 0 0 1px;position:relative}
  .vr .gt{height:3px;width:50px;margin-left:1px;border:1px solid #bbb;border-bottom-color:#999;box-sizing:border-box}
  .cols{display:flex;margin-top:3px;align-items:flex-start}
  .div{width:1px;background:#a8a8a8;margin:1px 2px 0 3px;height:360px;flex:none}
  .split{height:5px;flex:none;background:#e4e4e4;border-top:1px solid #a0a0a0;box-sizing:border-box}
  .cmd{display:flex;height:164px;flex:none;background:#fff;border-left:1px solid #909090}
  .log{flex:1;overflow:hidden;padding-left:3px;min-width:0;position:relative}
  .log .in{margin-top:-6px}
  .vs{width:16px;flex:none;background:#f0f0f0;display:flex;flex-direction:column;align-items:center;margin-right:3px}
  .vs svg{flex:none;display:block}.vs .p{height:71px;flex:none}.vs .t{height:58px;width:16px;background:#cdcdcd;flex:none}.vs .e{flex:1}
  .inp{display:flex;align-items:center;height:20px;flex:none;background:#fff;border-top:1px solid #909090;border-left:1px solid #909090;box-sizing:border-box;font:13px "Noto Sans CJK SC",sans-serif;padding-left:3px}
  .inp .lab{width:394px;flex:none;margin-top:-4px}
  .hs{width:69px;height:16px;flex:none}
  </style>
  <div class="tb r1 grip"><mx-tools items="new open fold2 fold3 save ramp saveall | zpm zwin zpan hand axes zrot bulb dry"></mx-tools><div class="rule"></div></div>
  <div class="tb r2 grip"><mx-tools items="zprev zeye cross pen palette stripes brush winarrow | tag | undo redo | printer globe1 globe2 | pdf image"></mx-tools></div>
  <div class="tb r3"><div class="r3box grip"><mx-tools items="ruler shape cloud chat ring pencil | zrect"></mx-tools></div></div>
  <div class="tb r4 grip"><mx-icon name="layers"></mx-icon>
    <mx-combo style="width:250px;margin-left:0"><svg width="12" height="10" viewBox="0 0 12 10" style="margin-left:2px"><path d="M0 5q6-6 12 0q-6 5-12 0z" fill="#5a7b96"/><circle cx="7" cy="5" r="2.200" fill="#16324a"/></svg><svg width="17" height="16" viewBox="0 0 17 16"><path d="M2 8V4q0-3 3.500-3t3.500 3v2" fill="none" stroke="#b9862a" stroke-width="1.600"/><rect x="5" y="6.500" width="11" height="8.500" fill="#c8963a" stroke="#7d5b1a"/><path d="M6 9.500h9M6 12h9" stroke="#7d5b1a"/></svg><svg width="13" height="13" viewBox="0 0 13 13" style="margin-left:1px"><circle cx="6.500" cy="6.500" r="6" fill="#ffd000" stroke="#f0a000" stroke-dasharray="2 1" stroke-width="1.300"/><circle cx="6.500" cy="6.500" r="3.500" fill="#ffc000"/></svg><svg width="10" height="10" viewBox="0 0 10 10" style="margin-left:2px"><rect x=".5" y=".5" width="9" height="9" fill="#fff" stroke="#000"/></svg><span style="margin-left:14px">0</span></mx-combo>
    <div class="sep"></div>
    <mx-combo style="width:119px;margin-left:2px"><svg width="10" height="10" viewBox="0 0 10 10" style="margin-left:4px"><rect x=".5" y=".5" width="9" height="9" fill="#fff" stroke="#000"/></svg><span style="margin-left:10px">ByLayer</span></mx-combo>
    <div class="rule" style="bottom:0"></div></div>
  <div class="tb r5"><mx-combo style="width:179px"><svg width="64" height="3" viewBox="0 0 64 3" style="margin-left:2px"><path d="M0 1.500h64" stroke="#000"/></svg><span style="margin-left:5px">ByLayer</span></mx-combo><mx-icon name="brush"></mx-icon></div>
  <div class="mid">
   <div class="vl"><div class="gh"></div><mx-tools vertical items="line dline parc pent poly rectn arc circ spl ell earc point block block2 tA table IA hatch"></mx-tools><div class="fill"></div></div>
   <div class="cc"><mx-canvas></mx-canvas><mx-tabs></mx-tabs></div>
   <div class="vr"><div class="gt"></div><div class="cols">
     <mx-tools vertical items="dlin dali drad ddia dang | dbrk | ov1 ov2 ov3 ov4"></mx-tools>
     <div class="div"></div>
     <mx-tools vertical items="erase copyc move rot scale offs array mirror paint2 fill1 fill2 ext trim expl stretch join"></mx-tools>
   </div></div>
  </div>
  <div class="split"></div>
  <div class="cmd"><div class="log"><div class="in">${lines.map(l=>`<mx-cmdline text="${l.replace(/</g,'&lt;').replace(/>/g,'&gt;')}"></mx-cmdline>`).join('')}</div></div>
   <div class="vs"><svg width="16" height="17" viewBox="0 0 16 17"><path d="M4 10l4-4 4 4" fill="none" stroke="#555" stroke-width="1.800"/></svg><div class="p"></div><div class="t"></div><div class="e"></div><svg width="16" height="17" viewBox="0 0 16 17"><path d="M4 7l4 4 4-4" fill="none" stroke="#555" stroke-width="1.800"/></svg></div></div>
  <div class="inp"><span class="lab">命令:</span><mx-hscroll class="hs" thumb="17" pre="15"></mx-hscroll></div>
  <mx-status></mx-status>`;
 }
}
customElements.define('mx-cad',MxCad);

class MxWindow extends HTMLElement{
 connectedCallback(){
  const s=this.attachShadow({mode:'open'});
  s.innerHTML=`<style>:host{display:flex;flex-direction:column;width:908px;height:853px;box-sizing:border-box;border:1px solid #55534f;border-top:0;background:#f0f0f0}
  .title{height:26px;background:#4d4b48;flex:none;display:flex;align-items:center;color:#e6e6e6;font:12.500px "Noto Sans",sans-serif;padding-left:3px;margin:0 -1px;border-top:1px solid #5c5a57;box-sizing:border-box}
  .title span{margin-left:6px;flex:1}
  .wb{width:46px;height:25px;display:flex;align-items:center;justify-content:center;flex:none}
  .main{display:flex;flex:1;padding:13px 0 0 12px;align-items:flex-start;min-height:0}
  .side{display:flex;flex-direction:column;margin-left:7px;height:801px;justify-content:flex-end;box-sizing:border-box;flex:none}
  .gap{width:3px;flex:none}
  mx-button+mx-button{margin-top:10px}.first{margin-bottom:4px}</style>
  <div class="title"><svg width="16" height="18" viewBox="0 0 16 18"><path d="M5 3l5-2 4 2v7H5z" fill="#d8453a"/><path d="M10 1l4 2-4 2-5-2z" fill="#ef7a68"/><path d="M1 8l5-1v7l-5 1z" fill="#5aa04a"/><path d="M1 8l4-2 3 1-3 2z" fill="#9ac878"/><path d="M8 10l6-1v7l-6 1z" fill="#2f6fb0"/><path d="M8 10l3-2 4 1-3 2z" fill="#7fb0dc"/></svg><span>MxDatabase</span>
   <div class="wb"><svg width="11" height="2" viewBox="0 0 11 2"><path d="M0 1h11" stroke="#fff"/></svg></div>
   <div class="wb"><svg width="10" height="10" viewBox="0 0 10 10"><rect x=".5" y=".5" width="9" height="9" fill="none" stroke="#fff"/></svg></div>
   <div class="wb"><svg width="11" height="11" viewBox="0 0 11 11"><path d="M.5.500l10 10M10.500.500l-10 10" stroke="#ddd" fill="none"/></svg></div></div>
  <div class="main"><mx-tree></mx-tree><div class="gap"></div><mx-cad></mx-cad>
   <div class="side"><mx-button primary class="first">获取信息</mx-button><mx-button>确定</mx-button><mx-button>取消</mx-button></div></div>`;
 }
}
customElements.define('mx-window',MxWindow);
</script>
</body></html>
